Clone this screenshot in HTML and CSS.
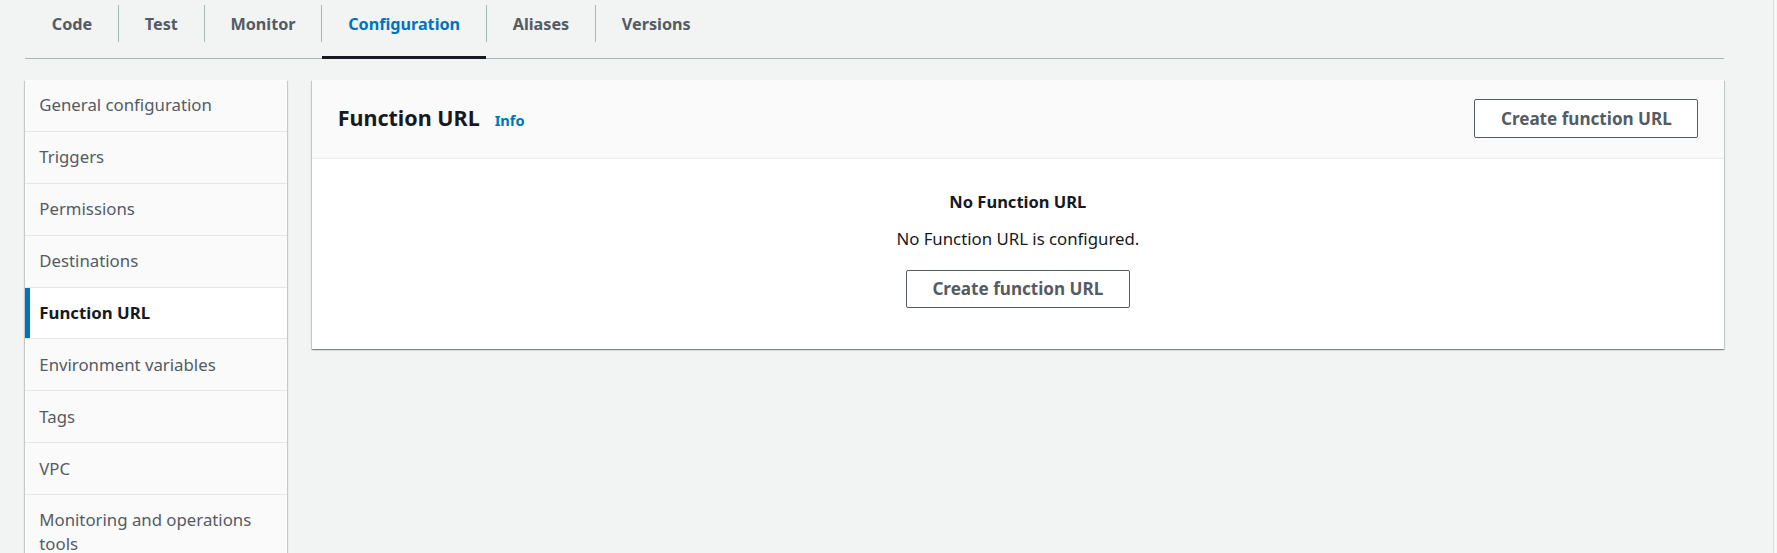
FILE: index.html
```html
<!DOCTYPE html>
<html lang="en">
<head>
<meta charset="utf-8">
<title>Function URL</title>
<link rel="stylesheet" href="styles.css">
</head>
<body>
<div class="page">
  <div class="main">
    <ul class="tabs">
      <li class="tab"><span class="tab-label">Code</span></li>
      <li class="tab"><span class="tab-label">Test</span></li>
      <li class="tab"><span class="tab-label">Monitor</span></li>
      <li class="tab tab-active"><span class="tab-label">Configuration</span></li>
      <li class="tab"><span class="tab-label">Aliases</span></li>
      <li class="tab"><span class="tab-label">Versions</span></li>
    </ul>
    <div class="layout">
      <nav class="sidenav">
        <div class="nav-item">General configuration</div>
        <div class="nav-item">Triggers</div>
        <div class="nav-item">Permissions</div>
        <div class="nav-item">Destinations</div>
        <div class="nav-item nav-active">Function URL</div>
        <div class="nav-item">Environment variables</div>
        <div class="nav-item">Tags</div>
        <div class="nav-item">VPC</div>
        <div class="nav-item">Monitoring and operations tools</div>
      </nav>
      <section class="panel">
        <header class="panel-header">
          <h2 class="panel-title">Function URL <a class="info-link">Info</a></h2>
          <button class="btn">Create function URL</button>
        </header>
        <div class="panel-body">
          <div class="empty-title">No Function URL</div>
          <div class="empty-text">No Function URL is configured.</div>
          <button class="btn">Create function URL</button>
        </div>
      </section>
    </div>
  </div>
  <div class="edge"></div>
</div>
</body>
</html>
```
FILE: styles.css
```css
html, body {
  margin: 0;
  padding: 0;
  background: #f2f3f3;
  font-family: "Noto Sans", "Open Sans", sans-serif;
  color: #16191f;
  height: 100%;
  overflow: hidden;
}

.page {
  display: flex;
  height: 100%;
}

.main {
  flex: 1;
  min-width: 0;
}

.edge {
  width: 3px;
  border-left: 1px solid #d9dcdc;
  background: #f6f6f6;
}

/* Tabs */
.tabs {
  list-style: none;
  margin: 0 49px 0 25px;
  padding: 0;
  display: flex;
  border-bottom: 1px solid #aab7b8;
  height: 58px;
}

.tab {
  position: relative;
  padding: 5px 0 16px;
}

.tab-label {
  display: flex;
  align-items: center;
  height: 37px;
  padding: 0 25.8px;
  border-left: 1px solid #aab7b8;
  font-size: 16.2px;
  line-height: 22px;
  font-weight: 700;
  color: #545b64;
}

.tab:first-child .tab-label {
  border-left-color: transparent;
}

.tab-active .tab-label {
  color: #0073bb;
}

.tab-active::after {
  content: "";
  position: absolute;
  left: 1px;
  right: 0;
  bottom: -1px;
  height: 3px;
  background: #16191f;
}

/* Layout */
.layout {
  display: flex;
  align-items: flex-start;
  gap: 24.7px;
  margin: 21px 49px 0 25px;
}

.sidenav {
  width: 262px;
  flex: none;
  background: #fafafa;
  box-shadow: 0 1px 1px 0 rgba(0, 28, 36, 0.3), 1px 1px 1px 0 rgba(0, 28, 36, 0.15), -1px 1px 1px 0 rgba(0, 28, 36, 0.15);
}

.nav-item {
  padding: 13.45px 14px 13.45px 14.3px;
  font-size: 16.8px;
  line-height: 24px;
  color: #545b64;
  border-bottom: 1px solid #e4e7e7;
  background: #fafafa;
}

.nav-active {
  background: #fff;
  font-weight: 700;
  color: #16191f;
  box-shadow: inset 5px 0 0 #0073bb;
}

/* Panel */
.panel {
  flex: 1;
  background: #fff;
  box-shadow: 0 1px 1px 0 rgba(0, 28, 36, 0.3), 1px 1px 1px 0 rgba(0, 28, 36, 0.15), -1px 1px 1px 0 rgba(0, 28, 36, 0.15);
}

.panel-header {
  display: flex;
  align-items: center;
  justify-content: space-between;
  padding: 19.3px 25.7px 20px 26px;
  background: #fafafa;
  border-bottom: 1px solid #eaeded;
}

.panel-title {
  margin: 0;
  font-size: 21.5px;
  line-height: 28px;
  font-weight: 700;
  color: #16191f;
  display: flex;
  align-items: baseline;
}

.info-link {
  margin-left: 15px;
  font-size: 14.6px;
  font-weight: 700;
  color: #0073bb;
}

.btn {
  font-family: "Noto Sans", "Open Sans", sans-serif;
  font-size: 17.1px;
  line-height: 23px;
  font-weight: 700;
  color: #545b64;
  background: #fff;
  border: 1px solid #545b64;
  border-radius: 2px;
  padding: 7px 25.5px;
  margin: 0;
}

.panel-body {
  display: flex;
  flex-direction: column;
  align-items: center;
  padding: 31px 20px 41px;
}

.empty-title {
  font-size: 16.5px;
  line-height: 23.5px;
  font-weight: 700;
  color: #16191f;
}

.empty-text {
  margin-top: 13.7px;
  font-size: 16.8px;
  line-height: 23.5px;
  color: #16191f;
}

.panel-body .btn {
  margin-top: 18.8px;
  padding-top: 6.5px;
  padding-bottom: 6.5px;
}
```
